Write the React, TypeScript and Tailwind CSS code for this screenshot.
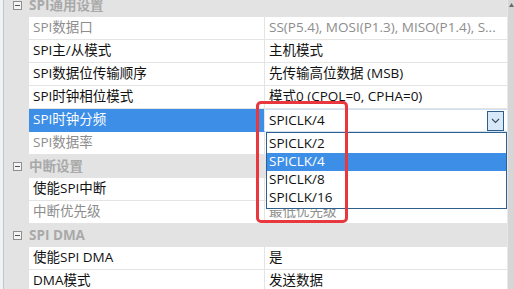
import { ReactNode } from "react";

type Row =
    | { kind: "category"; title: string }
    | {
          kind: "prop";
          label: string;
          value: string;
          disabled?: boolean;
          selected?: boolean;
      };

const rows: Row[] = [
    { kind: "category", title: "SPI通用设置" },
    {
        kind: "prop",
        label: "SPI数据口",
        value: "SS(P5.4), MOSI(P1.3), MISO(P1.4), S...",
        disabled: true,
    },
    { kind: "prop", label: "SPI主/从模式", value: "主机模式" },
    { kind: "prop", label: "SPI数据位传输顺序", value: "先传输高位数据 (MSB)" },
    { kind: "prop", label: "SPI时钟相位模式", value: "模式0 (CPOL=0, CPHA=0)" },
    { kind: "prop", label: "SPI时钟分频", value: "SPICLK/4", selected: true },
    { kind: "prop", label: "SPI数据率", value: "", disabled: true },
    { kind: "category", title: "中断设置" },
    { kind: "prop", label: "使能SPI中断", value: "" },
    { kind: "prop", label: "中断优先级", value: "最低优先级", disabled: true },
    { kind: "category", title: "SPI DMA" },
    { kind: "prop", label: "使能SPI DMA", value: "是" },
    { kind: "prop", label: "DMA模式", value: "发送数据" },
];

const options = ["SPICLK/2", "SPICLK/4", "SPICLK/8", "SPICLK/16"];

const MinusBox = () => (
    <div className="w-[9px] h-[9px] border border-[#8f8f8f] bg-[#f4f4f4] flex items-center justify-center">
        <div className="w-[5px] h-[1px] bg-[#555]" />
    </div>
);

const Cell = ({ children, className }: { children: ReactNode; className: string }) => (
    <div className={`h-full flex items-center px-[4px] whitespace-nowrap overflow-hidden ${className}`}>
        {children}
    </div>
);

const App = () => {
    return (
        <div
            className="relative w-[514px] h-[289px] overflow-hidden flex bg-white text-[13.5px] leading-none"
            style={{ fontFamily: '"Open Sans", "Noto Sans CJK SC", sans-serif' }}
        >
            <div className="w-[4px] h-full bg-[#f1f1f1] border-r border-[#b7c7d7]" />
            <div className="w-[503px] h-full bg-[#e3e3e3]">
                <div className="-mt-[6px]">
                    {rows.map((row, i) =>
                        row.kind === "category" ? (
                            <div key={i} className="h-[23px] flex items-center bg-[#e3e3e3]">
                                <div className="w-[25px] flex justify-center pl-[2px]">
                                    <MinusBox />
                                </div>
                                <span className="font-bold text-[#a9a9a9]">{row.title}</span>
                            </div>
                        ) : (
                            <div key={i} className="h-[23px] flex">
                                <div className="w-[25px]" />
                                <Cell
                                    className={`w-[236px] border-r border-b ${
                                        row.selected
                                            ? "bg-[#3d8ee6] text-white border-b-[#3d8ee6] border-r-[#e4e4e4]"
                                            : `bg-white border-[#e4e4e4] ${
                                                  row.disabled ? "text-[#8d8d8d]" : "text-[#111]"
                                              }`
                                    }`}
                                >
                                    {row.label}
                                </Cell>
                                {row.selected ? (
                                    <div className="flex-1 h-full bg-white border-y border-[#cfe0f2] flex items-center justify-between pl-[4px] pr-[3px]">
                                        <span className="text-[#111]">{row.value}</span>
                                        <div className="w-[17px] h-[20px] bg-[#d7e8f8] border border-[#2d5e8a] flex items-center justify-center">
                                            <svg width="9" height="6" viewBox="0 0 9 6">
                                                <path d="M1 1 L4.5 4.5 L8 1" fill="none" stroke="#3c4b5a" strokeWidth="1.1" />
                                            </svg>
                                        </div>
                                    </div>
                                ) : (
                                    <Cell
                                        className={`flex-1 bg-white border-b border-[#e4e4e4] ${
                                            row.disabled ? "text-[#8d8d8d]" : "text-[#111]"
                                        }`}
                                    >
                                        {row.value}
                                    </Cell>
                                )}
                            </div>
                        )
                    )}
                </div>
            </div>
            <div className="w-[7px] h-full bg-[#d6d6d6] border-l border-[#e8e8e8] flex justify-center pt-[3px]">
                <svg width="5" height="4" viewBox="0 0 5 4">
                    <path d="M0 4 L2.5 0 L5 4 Z" fill="#6a6a6a" />
                </svg>
            </div>

            {/* dropdown list */}
            <div className="absolute left-[266px] top-[132px] w-[241px] h-[77px] bg-white border border-[#2f5f8c] pt-[2px]">
                {options.map((opt) => (
                    <div
                        key={opt}
                        className={`h-[18px] flex items-center pl-[2px] ${
                            opt === "SPICLK/4" ? "bg-[#3d8ee6] text-white" : "text-[#111]"
                        }`}
                    >
                        {opt}
                    </div>
                ))}
            </div>

            {/* highlight annotation */}
            <div className="absolute left-[256px] top-[101px] w-[92px] h-[122px] border-[3px] border-[#e8383d] rounded-[5px]" />
        </div>
    );
};

export default App;
